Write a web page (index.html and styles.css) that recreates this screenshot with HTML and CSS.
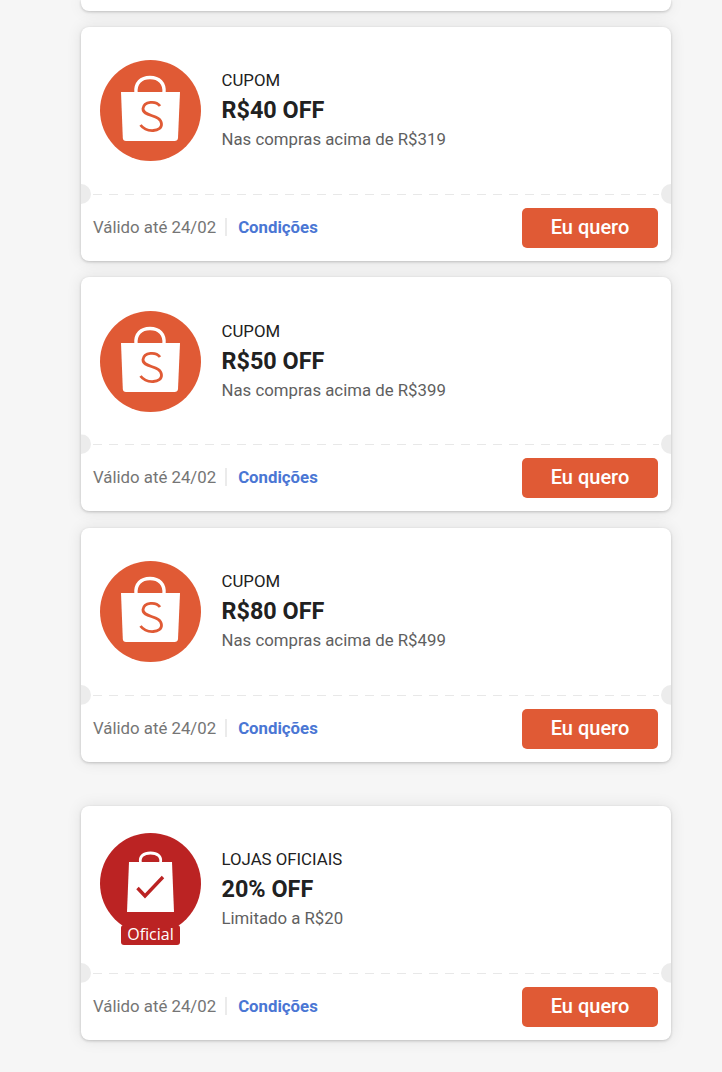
FILE: index.html
```html
<!DOCTYPE html>
<html lang="pt-BR">
<head>
    <meta charset="UTF-8">
    <meta name="viewport" content="width=device-width, initial-scale=1.0">
    <title>Cupons</title>
    <link rel="stylesheet" href="styles.css">
</head>
<body>
    <div class="coupon-list">
        <div class="coupon coupon-stub"></div>

        <div class="coupon">
            <div class="coupon-top">
                <svg class="coupon-icon" viewBox="0 0 101 101">
                    <circle cx="50.5" cy="50.5" r="50.5" fill="#e05a35"/>
                    <path d="M36 33C35 23 41 17.500 50 17.500S65 23 64 33" fill="none" stroke="#fff" stroke-width="3.400"/>
                    <path d="M21 32H80L78 78Q77.800 81 74.500 81H26Q23 81 22.800 78Z" fill="#fff"/>
                    <path d="M60 46C56 40.500 44 41 43 48.500C42.500 57 61 54 61.500 64C61.800 72 46.500 73 40.500 65" fill="none" stroke="#e05a35" stroke-width="2.800"/>
                </svg>
                <div class="coupon-info">
                    <div class="coupon-type">CUPOM</div>
                    <div class="coupon-value">R$40 OFF</div>
                    <div class="coupon-rule">Nas compras acima de R$319</div>
                </div>
            </div>
            <div class="coupon-bottom">
                <span class="coupon-date">Válido até 24/02</span>
                <a class="coupon-terms" href="#">Condições</a>
                <button class="coupon-btn">Eu quero</button>
            </div>
        </div>

        <div class="coupon">
            <div class="coupon-top">
                <svg class="coupon-icon" viewBox="0 0 101 101">
                    <circle cx="50.5" cy="50.5" r="50.5" fill="#e05a35"/>
                    <path d="M36 33C35 23 41 17.500 50 17.500S65 23 64 33" fill="none" stroke="#fff" stroke-width="3.400"/>
                    <path d="M21 32H80L78 78Q77.800 81 74.500 81H26Q23 81 22.800 78Z" fill="#fff"/>
                    <path d="M60 46C56 40.500 44 41 43 48.500C42.500 57 61 54 61.500 64C61.800 72 46.500 73 40.500 65" fill="none" stroke="#e05a35" stroke-width="2.800"/>
                </svg>
                <div class="coupon-info">
                    <div class="coupon-type">CUPOM</div>
                    <div class="coupon-value">R$50 OFF</div>
                    <div class="coupon-rule">Nas compras acima de R$399</div>
                </div>
            </div>
            <div class="coupon-bottom">
                <span class="coupon-date">Válido até 24/02</span>
                <a class="coupon-terms" href="#">Condições</a>
                <button class="coupon-btn">Eu quero</button>
            </div>
        </div>

        <div class="coupon">
            <div class="coupon-top">
                <svg class="coupon-icon" viewBox="0 0 101 101">
                    <circle cx="50.5" cy="50.5" r="50.5" fill="#e05a35"/>
                    <path d="M36 33C35 23 41 17.500 50 17.500S65 23 64 33" fill="none" stroke="#fff" stroke-width="3.400"/>
                    <path d="M21 32H80L78 78Q77.800 81 74.500 81H26Q23 81 22.800 78Z" fill="#fff"/>
                    <path d="M60 46C56 40.500 44 41 43 48.500C42.500 57 61 54 61.500 64C61.800 72 46.500 73 40.500 65" fill="none" stroke="#e05a35" stroke-width="2.800"/>
                </svg>
                <div class="coupon-info">
                    <div class="coupon-type">CUPOM</div>
                    <div class="coupon-value">R$80 OFF</div>
                    <div class="coupon-rule">Nas compras acima de R$499</div>
                </div>
            </div>
            <div class="coupon-bottom">
                <span class="coupon-date">Válido até 24/02</span>
                <a class="coupon-terms" href="#">Condições</a>
                <button class="coupon-btn">Eu quero</button>
            </div>
        </div>

        <div class="coupon coupon-official">
            <div class="coupon-top">
                <div class="official-icon">
                    <svg class="coupon-icon" viewBox="0 0 101 101">
                        <circle cx="50.5" cy="50.5" r="50.5" fill="#bb2323"/>
                        <path d="M40.500 30C39 23 44 20 50.500 20S62 23 60.500 30" fill="none" stroke="#fff" stroke-width="2.800"/>
                        <path d="M29 29H72L74 79H27Z" fill="#fff"/>
                        <path d="M37.500 55L45 63L63 44" fill="none" stroke="#bb2323" stroke-width="3.400"/>
                    </svg>
                    <span class="official-badge">Oficial</span>
                </div>
                <div class="coupon-info">
                    <div class="coupon-type">LOJAS OFICIAIS</div>
                    <div class="coupon-value">20% OFF</div>
                    <div class="coupon-rule">Limitado a R$20</div>
                </div>
            </div>
            <div class="coupon-bottom">
                <span class="coupon-date">Válido até 24/02</span>
                <a class="coupon-terms" href="#">Condições</a>
                <button class="coupon-btn">Eu quero</button>
            </div>
        </div>
    </div>
</body>
</html>
```

FILE: styles.css
```css
html, body {
    margin: 0;
    height: 1072px;
    overflow: hidden;
}

body {
    background-color: #f6f6f6;
    font-family: Roboto, "Liberation Sans", sans-serif;
    color: #212121;
}

.coupon-list {
    display: flex;
    flex-direction: column;
    gap: 16.4px;
    width: 590px;
    margin-left: 81px;
}

.coupon {
    position: relative;
    flex-shrink: 0;
    background-color: white;
    border-radius: 8px;
    box-shadow: 0 1px 3px rgba(0, 0, 0, 0.2), 0 0 16px rgba(0, 0, 0, 0.09);
}

.coupon-stub {
    height: 10.6px;
    border-radius: 0 0 8px 8px;
}

.coupon-official {
    margin-top: 27.6px;
}

.coupon-top {
    display: flex;
    align-items: center;
    gap: 20.5px;
    height: 168px;
    padding-left: 19px;
    background: repeating-linear-gradient(90deg, #e8e8e8 0 9px, transparent 9px 16px) 12px 100% / 566px 1px no-repeat;
}

.coupon-icon {
    display: block;
    flex-shrink: 0;
    width: 101px;
    height: 101px;
}

.coupon-info {
    margin-top: -2px;
}

.coupon-official .coupon-info {
    margin-top: -2px;
}

.official-icon {
    position: relative;
    flex-shrink: 0;
    height: 101px;
    margin-top: -12px;
}

.official-badge {
    position: absolute;
    left: 21px;
    top: 92px;
    width: 59px;
    height: 20px;
    background-color: #bb2323;
    border-radius: 3px;
    color: white;
    font-family: "Open Sans", sans-serif;
    font-size: 16px;
    line-height: 18px;
    text-align: center;
}

.coupon-type {
    font-size: 16.8px;
    line-height: 20px;
}

.coupon-value {
    font-size: 23.4px;
    font-weight: 700;
    line-height: 30px;
    margin-top: 5px;
}

.coupon-rule {
    font-size: 16.8px;
    line-height: 20px;
    margin-top: 4px;
    color: #5f5f5f;
}

/* Notches on both sides of the dashed line */
.coupon-top::before,
.coupon-top::after {
    content: "";
    position: absolute;
    top: 157px;
    width: 20px;
    height: 20px;
    border-radius: 50%;
    background-color: #ececec;
}

.coupon-top::before {
    left: -10px;
    clip-path: inset(0 0 0 10px);
}

.coupon-top::after {
    right: -10px;
    clip-path: inset(0 10px 0 0);
}

.coupon-bottom {
    display: flex;
    align-items: center;
    box-sizing: border-box;
    height: 66px;
    padding: 0 13px 2px 12px;
    font-size: 16.8px;
}

.coupon-date {
    color: #757575;
}

.coupon-terms {
    margin-left: 9px;
    padding-left: 11px;
    border-left: 2px solid #ebebeb;
    line-height: 18px;
    color: #4a76d4;
    font-weight: 700;
    text-decoration: none;
}

.coupon-btn {
    width: 136px;
    height: 40px;
    margin-left: auto;
    margin-top: 2px;
    padding-bottom: 3px;
    background-color: #e05a35;
    color: white;
    border: none;
    border-radius: 5px;
    font-family: inherit;
    font-size: 20px;
    font-weight: 500;
}
```
